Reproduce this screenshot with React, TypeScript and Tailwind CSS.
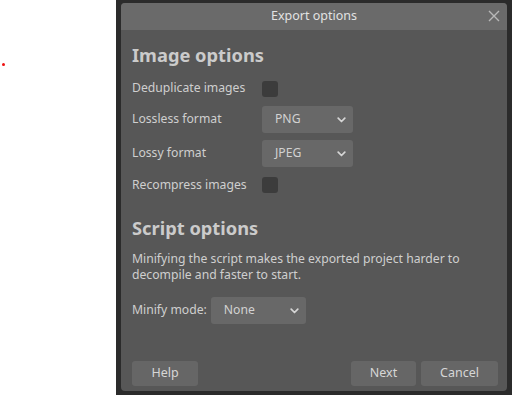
import React from "react";

function Chevron() {
  return (
    <svg width="9" height="6" viewBox="0 0 9 6" className="shrink-0">
      <path d="M1.2 1.2 L4.5 4.5 L7.8 1.2" fill="none" stroke="#d6d6d6" strokeWidth="1.7" strokeLinecap="round" strokeLinejoin="round" />
    </svg>
  );
}

function Select({ label, w }: { label: string; w: string }) {
  return (
    <div className={`${w} h-[27px] rounded-[3px] bg-[#686868] flex items-center justify-between pl-[13px] pr-[7px] text-[12.2px] text-[#d2d2d2]`}>
      <span>{label}</span>
      <Chevron />
    </div>
  );
}

function Check() {
  return <div className="w-[16px] h-[16px] rounded-[3px] bg-[#3c3c3c]" />;
}

export default function App() {
  return (
    <div className="w-[512px] h-[395px] bg-white relative overflow-hidden" style={{ fontFamily: '"Noto Sans", "Open Sans", sans-serif' }}>
      <div className="absolute left-[2px] top-[63px] w-[3px] h-[3px] bg-[#e11] rounded-full" />
      <div className="absolute left-[116px] top-0 w-[396px] h-[395px] bg-[#2b2b2b] pl-[5px] pr-[5px] pt-[3px] pb-[4px]">
        <div className="w-full h-full rounded-[4px] bg-[#575757] flex flex-col overflow-hidden">
          <div className="h-[27px] bg-[#6a6a6a] relative flex items-center justify-center text-[12.5px] text-[#e2e2e2]">
            <span>Export options</span>
            <svg className="absolute right-[7px] top-[7px]" width="12" height="12" viewBox="0 0 12 12">
              <path d="M1 1 L11 11 M11 1 L1 11" stroke="#b8b8b8" strokeWidth="1.4" />
            </svg>
          </div>
          <div className="flex-1 flex flex-col pl-[11px] pr-[9px] pt-[12px] pb-[5px] text-[12.2px] text-[#cfcfcf]">
            <div className="text-[18.3px] font-bold text-[#cbcbcb] leading-[26px]">Image options</div>
            <div className="mt-[6px] flex flex-col">
              <div className="h-[29px] flex items-center">
                <span className="w-[130px]">Deduplicate images</span>
                <Check />
              </div>
              <div className="h-[33px] flex items-center">
                <span className="w-[130px]">Lossless format</span>
                <Select label="PNG" w="w-[91px]" />
              </div>
              <div className="h-[35px] flex items-center">
                <span className="w-[130px]">Lossy format</span>
                <Select label="JPEG" w="w-[91px]" />
              </div>
              <div className="h-[28px] flex items-center">
                <span className="w-[130px]">Recompress images</span>
                <Check />
              </div>
            </div>
            <div className="mt-[16px] text-[18.3px] font-bold text-[#cbcbcb] leading-[26px]">Script options</div>
            <div className="mt-[10px] leading-[16px]">
              Minifying the script makes the exported project harder to
              <br />
              decompile and faster to start.
            </div>
            <div className="mt-[14px] flex items-center gap-[4px]">
              <span>Minify mode:</span>
              <Select label="None" w="w-[95px]" />
            </div>
            <div className="flex-1" />
            <div className="flex items-center h-[26px] mb-[0px] text-[12.5px]">
              <div className="w-[66px] h-[25px] rounded-[3px] bg-[#666666] flex items-center justify-center text-[#d6d6d6]">Help</div>
              <div className="flex-1" />
              <div className="w-[65px] h-[25px] rounded-[3px] bg-[#666666] flex items-center justify-center text-[#d6d6d6]">Next</div>
              <div className="w-[77px] h-[25px] ml-[5px] rounded-[3px] bg-[#666666] flex items-center justify-center text-[#d6d6d6]">Cancel</div>
            </div>
          </div>
        </div>
      </div>
    </div>
  );
}
